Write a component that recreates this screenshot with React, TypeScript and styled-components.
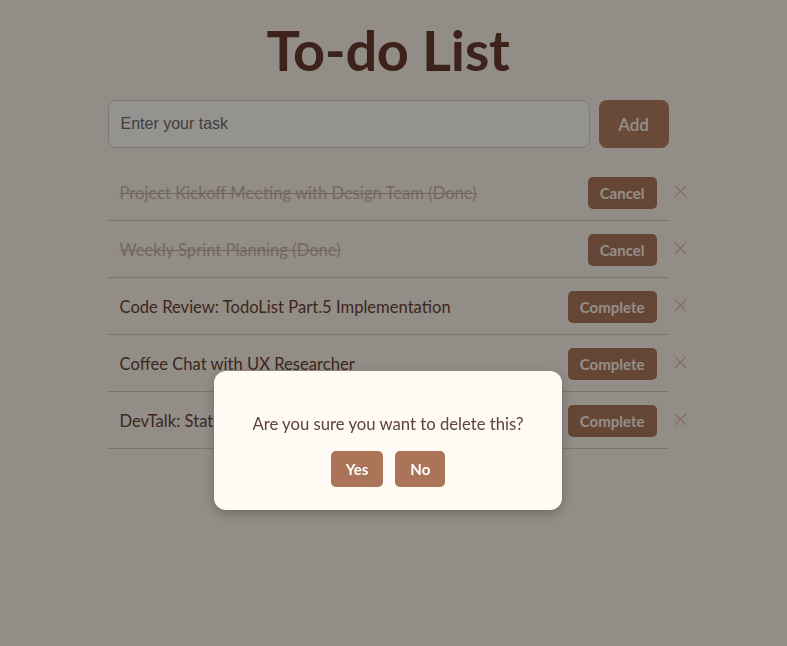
import React from "react";
import styled, { createGlobalStyle } from "styled-components";
import { X } from "lucide-react";

const GlobalStyle = createGlobalStyle`
  html, body { margin: 0; padding: 0; }
  body {
    background: #f3ede1;
    font-family: Lato, "Noto Sans", sans-serif;
    width: 787px;
    height: 646px;
    overflow: hidden;
  }
`;

const Page = styled.div`
  display: flex;
  justify-content: center;
  padding-right: 11px;
  box-sizing: border-box;
  min-height: 646px;
`;

const Container = styled.div`
  width: 561px;
  display: flex;
  flex-direction: column;
`;

const Title = styled.h1`
  margin: 18px 0 18px;
  text-align: center;
  font-size: 56px;
  line-height: 64px;
  font-weight: 700;
  color: #64392c;
  letter-spacing: -0.3px;
`;

const Form = styled.form`
  display: flex;
  gap: 9px;
  margin-bottom: 16px;
`;

const Input = styled.input`
  flex: 1;
  height: 48px;
  box-sizing: border-box;
  border: 1px solid #cfc8c0;
  border-radius: 8px;
  background: #f8f5f0;
  padding: 0 12px;
  font-family: "Liberation Sans", Arial, sans-serif;
  font-size: 16px;
  color: #333;
  &::placeholder { color: #6a6a6a; }
`;

const AddButton = styled.button`
  width: 70px;
  height: 48px;
  border: none;
  border-radius: 8px;
  background: #b07a5d;
  color: #f5eee6;
  font-family: Lato, "Noto Sans", sans-serif;
  font-size: 17px;
  font-weight: 600;
`;

const List = styled.ul`
  list-style: none;
  margin: 0;
  padding: 0;
`;

const Item = styled.li`
  position: relative;
  display: flex;
  align-items: center;
  height: 57px;
  box-sizing: border-box;
  padding: 0 12px;
  border-bottom: 1px solid #cfc5b8;
`;

const Text = styled.span<{ $done: boolean }>`
  flex: 1;
  padding-top: 2px;
  font-size: 16.6px;
  color: ${(p) => (p.$done ? "#c4ab9b" : "#693f30")};
  text-decoration: ${(p) => (p.$done ? "line-through" : "none")};
`;

const ToggleButton = styled.button`
  height: 32px;
  margin-top: 1px;
  padding: 0 12px;
  border: none;
  border-radius: 5px;
  background: #a97358;
  color: #f5eee6;
  font-family: Lato, "Noto Sans", sans-serif;
  font-size: 15px;
  font-weight: 700;
`;

const DeleteButton = styled.button`
  position: absolute;
  right: -24px;
  top: 50%;
  transform: translateY(-55%);
  width: 24px;
  height: 24px;
  padding: 0;
  border: none;
  background: transparent;
  color: #e6b0aa;
  display: flex;
  align-items: center;
  justify-content: center;
`;

const Overlay = styled.div`
  position: fixed;
  inset: 0;
  background: rgba(0, 0, 0, 0.4);
  display: flex;
  justify-content: center;
  align-items: flex-start;
  padding: 371px 11px 0 0;
  box-sizing: border-box;
`;

const Modal = styled.div`
  width: 348px;
  height: 139px;
  box-sizing: border-box;
  background: #fffaf3;
  border-radius: 12px;
  box-shadow: 0 4px 12px rgba(0, 0, 0, 0.25);
  display: flex;
  flex-direction: column;
  align-items: center;
  padding-top: 41px;
`;

const Message = styled.p`
  margin: 0 0 15px;
  font-size: 16.7px;
  line-height: 24px;
  color: #5e4438;
`;

const ModalActions = styled.div`
  display: flex;
  gap: 12px;
`;

const ModalButton = styled.button`
  height: 36px;
  padding: 0 15px;
  border: none;
  border-radius: 5px;
  background: #ab7459;
  color: #ffffff;
  font-family: Lato, "Noto Sans", sans-serif;
  font-size: 15px;
  font-weight: 700;
`;

const todos = [
  { text: "Project Kickoff Meeting with Design Team (Done)", done: true },
  { text: "Weekly Sprint Planning (Done)", done: true },
  { text: "Code Review: TodoList Part.5 Implementation", done: false },
  { text: "Coffee Chat with UX Researcher", done: false },
  { text: "DevTalk: State Management in React", done: false },
];

export default function App() {
  return (
    <>
      <GlobalStyle />
      <Page>
        <Container>
          <Title>To-do List</Title>
          <Form onSubmit={(e) => e.preventDefault()}>
            <Input placeholder="Enter your task" />
            <AddButton type="submit">Add</AddButton>
          </Form>
          <List>
            {todos.map((t) => (
              <Item key={t.text}>
                <Text $done={t.done}>{t.text}</Text>
                <ToggleButton>{t.done ? "Cancel" : "Complete"}</ToggleButton>
                <DeleteButton aria-label="delete">
                  <X size={21} strokeWidth={1.5} />
                </DeleteButton>
              </Item>
            ))}
          </List>
        </Container>
      </Page>
      <Overlay>
        <Modal>
          <Message>Are you sure you want to delete this?</Message>
          <ModalActions>
            <ModalButton>Yes</ModalButton>
            <ModalButton>No</ModalButton>
          </ModalActions>
        </Modal>
      </Overlay>
    </>
  );
}
